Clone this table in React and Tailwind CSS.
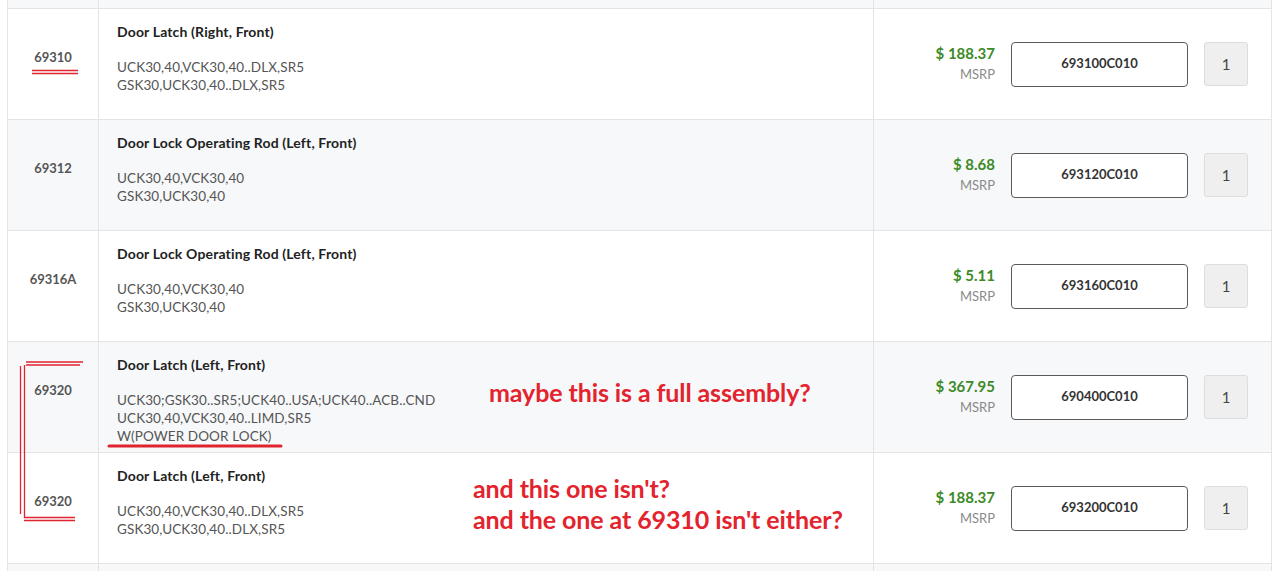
import React from "react";

const rows = [
  {
    num: "69310",
    title: "Door Latch (Right, Front)",
    lines: ["UCK30,40,VCK30,40..DLX,SR5", "GSK30,UCK30,40..DLX,SR5"],
    price: "$ 188.37",
    part: "693100C010",
    gray: false,
  },
  {
    num: "69312",
    title: "Door Lock Operating Rod (Left, Front)",
    lines: ["UCK30,40,VCK30,40", "GSK30,UCK30,40"],
    price: "$ 8.68",
    part: "693120C010",
    gray: true,
  },
  {
    num: "69316A",
    title: "Door Lock Operating Rod (Left, Front)",
    lines: ["UCK30,40,VCK30,40", "GSK30,UCK30,40"],
    price: "$ 5.11",
    part: "693160C010",
    gray: false,
  },
  {
    num: "69320",
    title: "Door Latch (Left, Front)",
    lines: [
      "UCK30;GSK30..SR5;UCK40..USA;UCK40..ACB..CND",
      "UCK30,40,VCK30,40..LIMD,SR5",
      "W(POWER DOOR LOCK)",
    ],
    price: "$ 367.95",
    part: "690400C010",
    gray: true,
  },
  {
    num: "69320",
    title: "Door Latch (Left, Front)",
    lines: ["UCK30,40,VCK30,40..DLX,SR5", "GSK30,UCK30,40..DLX,SR5"],
    price: "$ 188.37",
    part: "693200C010",
    gray: false,
  },
];

function Row({ r }) {
  return (
    <div
      className={`grid grid-cols-[91px_775px_1fr] h-[111px] border-b border-[#e4e4e4] ${
        r.gray ? "bg-[#f7f8f9]" : "bg-white"
      }`}
    >
      <div className="border-r border-[#e4e4e4] flex items-center justify-center pb-[13px]">
        <span className="text-[13px] font-bold text-[#555]">{r.num}</span>
      </div>
      <div className="border-r border-[#e4e4e4] pl-[18px] pt-[14px]">
        <div className="text-[14px] leading-[18px] font-bold text-[#222] tracking-[0.15px]">{r.title}</div>
        <div className="mt-[17px]">
          {r.lines.map((l, i) => (
            <div key={i} className="text-[13.5px] leading-[18px] text-[#555] tracking-[0.1px]">
              {l}
            </div>
          ))}
        </div>
      </div>
      <div className="flex items-center justify-end pr-[23px]">
        <div className="text-right">
          <div className="text-[15px] leading-[21px] font-bold text-[#3c8a28]">{r.price}</div>
          <div className="text-[13px] leading-[21px] text-[#8a8a8a]">MSRP</div>
        </div>
        <div className="ml-4 w-[177px] h-[45px] border border-[#5a5a5a] rounded-[4px] bg-white flex items-center justify-center text-[13px] font-bold text-[#333]">
          {r.part}
        </div>
        <div className="ml-[16px] w-[44px] h-[44px] border border-[#dddddd] rounded-[3px] bg-[#efefef] flex items-center justify-center text-[15px] text-[#444]">
          1
        </div>
      </div>
    </div>
  );
}

export default function App() {
  return (
    <div
      className="relative w-[1279px] h-[571px] overflow-hidden bg-white"
      style={{ fontFamily: "Lato, 'Open Sans', sans-serif" }}
    >
      <div className="ml-[7px] w-[1265px] border-l border-r border-[#e4e4e4]">
        <div className="grid grid-cols-[91px_775px_1fr] h-[9px] border-b border-[#e4e4e4] bg-[#f7f8f9]">
          <div className="border-r border-[#e4e4e4]" />
          <div className="border-r border-[#e4e4e4]" />
          <div />
        </div>
        {rows.map((r, i) => (
          <Row key={i} r={r} />
        ))}
        <div className="grid grid-cols-[91px_775px_1fr] h-[20px] bg-[#f7f8f9]">
          <div className="border-r border-[#e4e4e4]" />
          <div className="border-r border-[#e4e4e4]" />
          <div />
        </div>
      </div>

      {/* annotations */}
      <svg className="absolute left-0 top-0 pointer-events-none" width="1279" height="571">
        <g stroke="#e0242f" fill="none" strokeWidth="1.3">
          <line x1="32" y1="70.5" x2="78" y2="70.5" />
          <line x1="32" y1="73.5" x2="78" y2="73.5" />
          <line x1="26" y1="362" x2="83" y2="362" />
          <line x1="26" y1="365" x2="80" y2="365" />
          <line x1="20.5" y1="366" x2="20.5" y2="514" />
          <line x1="24.5" y1="365" x2="24.5" y2="518" />
          <line x1="24" y1="517.5" x2="75" y2="517.5" />
          <line x1="24" y1="520.5" x2="75" y2="520.5" />
        </g>
        <line x1="109" y1="446" x2="281" y2="446" stroke="#e0242f" strokeWidth="3" strokeLinecap="round" />
      </svg>
      <div
        className="absolute left-[489px] top-[377px] text-[25px] leading-[31px] font-bold text-[#e3232d] tracking-[-0.1px]"
        style={{ fontFamily: "Lato, sans-serif" }}
      >
        maybe this is a full assembly?
      </div>
      <div
        className="absolute left-[473px] top-[473px] text-[25px] leading-[31px] font-bold text-[#e3232d] tracking-[-0.1px]"
        style={{ fontFamily: "Lato, sans-serif" }}
      >
        <div>and this one isn't?</div>
        <div>and the one at 69310 isn't either?</div>
      </div>
    </div>
  );
}
